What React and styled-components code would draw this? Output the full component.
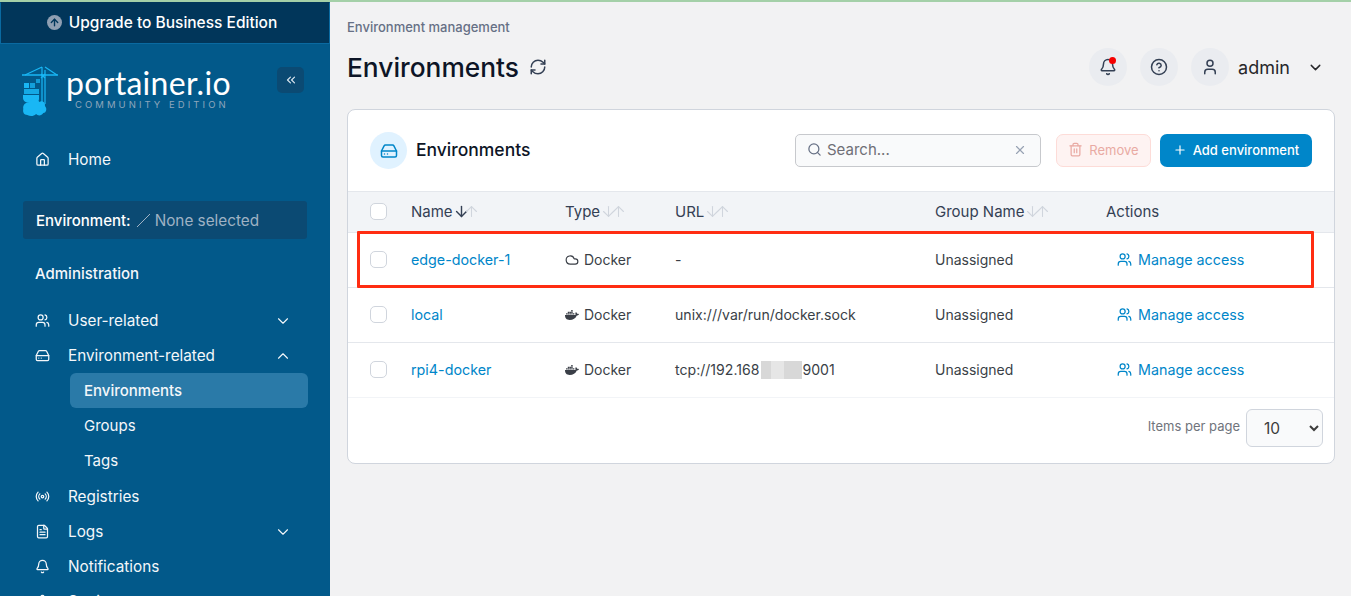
import React from 'react';
import styled, { createGlobalStyle } from 'styled-components';
import {
  Bell, ChevronDown, ChevronUp, ChevronsLeft, CircleHelp, Cloud, FileText, HardDrive, Home,
  Plus, Radio, RefreshCw, Search, Settings, Trash2, User, Users, X, ArrowUp, ArrowDown,
} from 'lucide-react';
import { FaDocker } from 'react-icons/fa';

const GlobalStyle = createGlobalStyle`
  html, body {
    margin: 0;
    padding: 0;
    height: 100%;
    overflow: hidden;
    background: #f2f2f3;
    font-family: Inter, "Liberation Sans", sans-serif;
  }
  * { box-sizing: border-box; }
`;

const Page = styled.div`
  height: 596px;
  overflow: hidden;
  border-top: 2px solid #a4d0a8;
`;

const Shell = styled.div`
  display: flex;
  height: 594px;
`;

const Sidebar = styled.aside`
  width: 330px;
  flex: none;
  background: #02598a;
  color: #f4f7fa;
  overflow: hidden;
`;

const UpgradeBar = styled.div`
  height: 42px;
  display: flex;
  align-items: center;
  justify-content: center;
  gap: 7px;
  padding: 0 6px 2px 0;
  background: #01365a;
  border: 1px solid #0a6aa1;
  border-top-color: #01365a;
  font-size: 15.5px;
  font-weight: 500;
  color: #fff;
`;

const UpgradeDot = styled.span`
  width: 15px;
  height: 15px;
  border-radius: 50%;
  background: #8f9fb2;
  color: #01365a;
  display: flex;
  align-items: center;
  justify-content: center;
`;

const LogoRow = styled.div`
  display: flex;
  align-items: flex-start;
  justify-content: space-between;
  padding: 22px 26px 0 22px;
  height: 98px;
`;

const Brand = styled.div`
  display: flex;
  gap: 8px;
`;

const BrandWords = styled.div`
  display: flex;
  flex-direction: column;
`;

const BrandName = styled.div`
  font-family: Lato, "Open Sans", sans-serif;
  font-size: 32px;
  line-height: 33px;
  font-weight: 400;
  color: #fff;
  letter-spacing: 0.3px;
`;

const BrandEdition = styled.div`
  margin-top: 1px;
  font-size: 9.5px;
  line-height: 10px;
  letter-spacing: 3.05px;
  color: #8da6bc;
  padding-left: 9px;
`;

const CollapseButton = styled.button`
  width: 27px;
  height: 26px;
  margin-top: 1px;
  border: 0;
  border-radius: 5px;
  background: #0b4a73;
  color: #dbe6ef;
  padding: 0;
  display: flex;
  align-items: center;
  justify-content: center;
`;

const NavItem = styled.div`
  height: ${(p) => (p.$tall ? '36px' : '35px')};
  display: flex;
  align-items: center;
  margin: ${(p) => (p.$sub ? '0 22px 0 70px' : '0 38px 0 35px')};
  padding-left: ${(p) => (p.$sub ? '14px' : '0')};
  border-radius: 6px;
  background: ${(p) => (p.$active ? '#2a7aa8' : 'transparent')};
  font-size: ${(p) => (p.$sub ? '15px' : '15.3px')};
  font-weight: ${(p) => (p.$active ? 500 : 400)};
  color: #f4f7fa;
  & > svg:first-child { margin-right: 18px; flex: none; }
`;

const NavLabel = styled.span`
  flex: 1;
`;

const EnvBox = styled.div`
  height: 38px;
  margin: 24px 23px 0;
  padding-left: 13px;
  display: flex;
  align-items: center;
  background: #0b4a73;
  border-radius: 3px;
  font-size: 15px;
  font-weight: 500;
  color: #fff;
`;

const EnvNone = styled.span`
  display: flex;
  align-items: center;
  gap: 4px;
  margin-left: 5px;
  font-size: 15.3px;
  font-weight: 400;
  color: #9fb2c4;
`;

const SectionTitle = styled.div`
  margin: 23px 0 17px 35px;
  font-size: 15px;
  font-weight: 500;
  line-height: 24px;
`;

const Main = styled.main`
  flex: 1;
  min-width: 0;
  padding: 0 16px 0 17px;
`;

const Breadcrumb = styled.div`
  padding-top: 17px;
  font-size: 13px;
  line-height: 16px;
  font-weight: 500;
  color: #667085;
`;

const Header = styled.header`
  display: flex;
  align-items: center;
  justify-content: space-between;
  height: 40px;
  margin-top: 12px;
`;

const TitleGroup = styled.div`
  display: flex;
  align-items: center;
  gap: 10px;
`;

const Title = styled.h1`
  margin: 0;
  font-size: 26.3px;
  font-weight: 500;
  color: #0d1526;
`;

const HeaderActions = styled.div`
  display: flex;
  align-items: center;
  gap: 13px;
  padding-right: 11px;
`;

const RoundIcon = styled.div`
  position: relative;
  width: 38px;
  height: 38px;
  border-radius: 50%;
  background: #eaecf0;
  color: #344054;
  display: flex;
  align-items: center;
  justify-content: center;
`;

const RedDot = styled.span`
  position: absolute;
  top: 9px;
  right: 11px;
  width: 7px;
  height: 7px;
  border-radius: 50%;
  background: #f50000;
`;

const UserName = styled.span`
  margin: 0 4px 0 -4px;
  font-size: 18px;
  color: #27272a;
`;

const Card = styled.section`
  position: relative;
  margin-top: 22px;
  height: 355px;
  background: #fff;
  border: 1px solid #d0d5dd;
  border-radius: 8px;
`;

const CardHead = styled.div`
  height: 82px;
  display: flex;
  align-items: center;
  padding: 0 22px;
  border-bottom: 1px solid #e4e7ec;
`;

const CardIcon = styled.div`
  width: 37px;
  height: 37px;
  border-radius: 50%;
  background: #e0f2ff;
  color: #0086c9;
  display: flex;
  align-items: center;
  justify-content: center;
`;

const CardTitle = styled.div`
  margin-left: 9px;
  padding-bottom: 2px;
  flex: 1;
  font-size: 17.5px;
  font-weight: 500;
  color: #0d1526;
`;

const SearchBox = styled.div`
  width: 246px;
  height: 33px;
  display: flex;
  align-items: center;
  padding: 0 13px 2px 11px;
  gap: 5px;
  background: #f9fafb;
  border: 1px solid #c7c9cd;
  border-radius: 5px;
  color: #667085;
`;

const SearchText = styled.span`
  flex: 1;
  font-size: 15px;
  color: #6f6f76;
`;

const RemoveButton = styled.div`
  width: 95px;
  height: 33px;
  margin-left: 15px;
  padding-bottom: 2px;
  display: flex;
  align-items: center;
  justify-content: center;
  gap: 6px;
  background: #fef3f2;
  border: 1px solid #fddcd8;
  border-radius: 7px;
  color: #e9aaa3;
  font-size: 13px;
  font-weight: 400;
`;

const AddButton = styled.div`
  width: 152px;
  height: 33px;
  margin-left: 9px;
  padding-bottom: 2px;
  display: flex;
  align-items: center;
  justify-content: center;
  gap: 6px;
  background: #0086c9;
  border-radius: 7px;
  color: #fff;
  font-size: 13px;
  font-weight: 500;
`;

const COLS = '63px 154px 110px 260px 171px 1fr';

const HeadRow = styled.div`
  display: grid;
  grid-template-columns: ${COLS};
  align-items: center;
  height: 41px;
  padding-bottom: 2px;
  background: #f2f4f7;
  border-bottom: 1px solid #e4e7ec;
  font-size: 15px;
  color: #344054;
`;

const Row = styled.div`
  display: grid;
  grid-template-columns: ${COLS};
  align-items: center;
  height: 55px;
  padding-bottom: 1px;
  border-bottom: 1px solid ${(p) => (p.$last ? '#f2f4f7' : '#e4e7ec')};
  font-size: 14px;
  color: #3a3f47;
`;

const CheckCell = styled.div`
  padding-left: 22px;
`;

const CheckBox = styled.span`
  display: block;
  width: 17px;
  height: 17px;
  background: #fff;
  border: 1px solid #d0d5dd;
  border-radius: 5px;
`;

const HeadCell = styled.div`
  display: flex;
  align-items: center;
`;

const SortMark = styled.span`
  display: flex;
`;

const NameLink = styled.a`
  color: #0086c9;
  font-size: 14.3px;
`;

const TypeCell = styled.div`
  display: flex;
  align-items: center;
  gap: 5px;
`;

const UrlCell = styled.div`
  font-size: 14.1px;
`;

const AccessLink = styled.a`
  display: flex;
  align-items: center;
  gap: 6px;
  padding-left: 11px;
  color: #0086c9;
  font-size: 14.3px;
`;

const Masked = styled.span`
  display: inline-block;
  width: 41px;
  height: 18px;
  margin-left: 2px;
  vertical-align: -4px;
  background: linear-gradient(90deg, #d8d8d8 25%, #e6e6e6 25%, #e6e6e6 55%, #d8d8d8 55%);
`;

const Footer = styled.div`
  display: flex;
  align-items: center;
  justify-content: flex-end;
  gap: 6px;
  height: 60px;
  padding-right: 11px;
  font-size: 13px;
  color: #70747c;
`;

const FooterLabel = styled.span`
  margin-bottom: 4px;
`;

const PageSelect = styled.select`
  width: 77px;
  height: 38px;
  padding-left: 13px;
  background: #f9fafb;
  border: 1px solid #d0d5dd;
  border-radius: 6px;
  font-family: inherit;
  font-size: 15.5px;
  color: #3c3c3c;
`;

const Highlight = styled.div`
  position: absolute;
  left: 9px;
  top: 121px;
  width: 957px;
  height: 57px;
  border: 3px solid #ff2d12;
  border-radius: 1px;
  pointer-events: none;
`;

const PortainerMark = () => (
  <svg width="36" height="52" viewBox="0 0 36 52" fill="none">
    <g stroke="#19b7f5" strokeWidth="1.2">
      <path d="M0 9H36" strokeWidth="1.6" />
      <path d="M20 1V38M23 4V38M20 1L3 9M23 1L35 9" />
      <path d="M19 8L23 12M23 8L19 12" />
    </g>
    <g fill="#19b7f5">
      <rect x="2" y="17" width="5" height="5" />
      <rect x="8" y="17" width="5" height="5" opacity="0.75" />
      <rect x="14" y="13" width="4" height="4" opacity="0.7" />
      <rect x="2" y="23" width="15" height="5" opacity="0.85" />
      <path d="M1 29H17V33C17 36 13 37 9 37C4 37 1 35 1 32Z" />
      <path transform="translate(0.5 -1) scale(0.8 1)" d="M6 50C2 50 0 47 1 44C0 40 4 37 8 38C11 33 19 33 21 37C25 35 29 38 28 41C31 43 30 48 26 48C24 51 19 51 17 49C13 52 9 51 6 50Z" />
    </g>
  </svg>
);

const SlashMark = () => (
  <svg width="15" height="15" viewBox="0 0 15 15" fill="none">
    <path d="M1 14L14 1" stroke="#9fb2c4" strokeWidth="1" />
  </svg>
);

const Sort = ({ active }) => (
  <SortMark>
    <ArrowDown size={17} strokeWidth={active ? 2 : 1.5} color={active ? '#344054' : '#d0d5dd'} style={{ marginRight: -7 }} />
    <ArrowUp size={17} strokeWidth={1.5} color="#d0d5dd" />
  </SortMark>
);

const environments = [
  { name: 'edge-docker-1', icon: 'cloud', url: '-' },
  { name: 'local', icon: 'docker', url: 'unix:///var/run/docker.sock' },
  { name: 'rpi4-docker', icon: 'docker', url: 'masked', last: true },
];

const App = () => (
  <Page>
    <GlobalStyle />
    <Shell>
      <Sidebar>
        <UpgradeBar>
          <UpgradeDot><ArrowUp size={11} strokeWidth={3} /></UpgradeDot>
          Upgrade to Business Edition
        </UpgradeBar>
        <LogoRow>
          <Brand>
            <PortainerMark />
            <BrandWords>
              <BrandName>portainer.io</BrandName>
              <BrandEdition>COMMUNITY EDITION</BrandEdition>
            </BrandWords>
          </Brand>
          <CollapseButton><ChevronsLeft size={14} /></CollapseButton>
        </LogoRow>
        <NavItem><Home size={15} />Home</NavItem>
        <EnvBox>
          Environment:
          <EnvNone><SlashMark />None selected</EnvNone>
        </EnvBox>
        <SectionTitle>Administration</SectionTitle>
        <NavItem><Users size={15} /><NavLabel>User-related</NavLabel><ChevronDown size={18} strokeWidth={1.5} /></NavItem>
        <NavItem><HardDrive size={15} /><NavLabel>Environment-related</NavLabel><ChevronUp size={18} strokeWidth={1.5} /></NavItem>
        <NavItem $sub $active>Environments</NavItem>
        <NavItem $sub>Groups</NavItem>
        <NavItem $sub>Tags</NavItem>
        <NavItem $tall><Radio size={15} />Registries</NavItem>
        <NavItem><FileText size={15} /><NavLabel>Logs</NavLabel><ChevronDown size={18} strokeWidth={1.5} /></NavItem>
        <NavItem><Bell size={15} />Notifications</NavItem>
        <NavItem><Settings size={15} />Settings</NavItem>
      </Sidebar>
      <Main>
        <Breadcrumb>Environment management</Breadcrumb>
        <Header>
          <TitleGroup>
            <Title>Environments</Title>
            <RefreshCw size={18} color="#344054" />
          </TitleGroup>
          <HeaderActions>
            <RoundIcon><Bell size={18} /><RedDot /></RoundIcon>
            <RoundIcon><CircleHelp size={18} /></RoundIcon>
            <RoundIcon><User size={18} /></RoundIcon>
            <UserName>admin</UserName>
            <ChevronDown size={17} color="#27272a" />
          </HeaderActions>
        </Header>
        <Card>
          <CardHead>
            <CardIcon><HardDrive size={18} /></CardIcon>
            <CardTitle>Environments</CardTitle>
            <SearchBox>
              <Search size={15} />
              <SearchText>Search...</SearchText>
              <X size={14} color="#98a2b3" />
            </SearchBox>
            <RemoveButton><Trash2 size={15} />Remove</RemoveButton>
            <AddButton><Plus size={14} />Add environment</AddButton>
          </CardHead>
          <HeadRow>
            <CheckCell><CheckBox /></CheckCell>
            <HeadCell>Name<Sort active /></HeadCell>
            <HeadCell>Type<Sort /></HeadCell>
            <HeadCell>URL<Sort /></HeadCell>
            <HeadCell>Group Name<Sort /></HeadCell>
            <HeadCell>Actions</HeadCell>
          </HeadRow>
          {environments.map((env) => (
            <Row key={env.name} $last={env.last}>
              <CheckCell><CheckBox /></CheckCell>
              <NameLink>{env.name}</NameLink>
              <TypeCell>
                {env.icon === 'cloud' ? <Cloud size={14} /> : <FaDocker size={14} />}
                Docker
              </TypeCell>
              <UrlCell>
                {env.url === 'masked' ? <>tcp://192.168<Masked />9001</> : env.url}
              </UrlCell>
              <div>Unassigned</div>
              <AccessLink><Users size={15} />Manage access</AccessLink>
            </Row>
          ))}
          <Footer>
            <FooterLabel>Items per page</FooterLabel>
            <PageSelect defaultValue="10">
              <option value="10">10</option>
              <option value="25">25</option>
              <option value="50">50</option>
            </PageSelect>
          </Footer>
          <Highlight />
        </Card>
      </Main>
    </Shell>
  </Page>
);

export default App;
